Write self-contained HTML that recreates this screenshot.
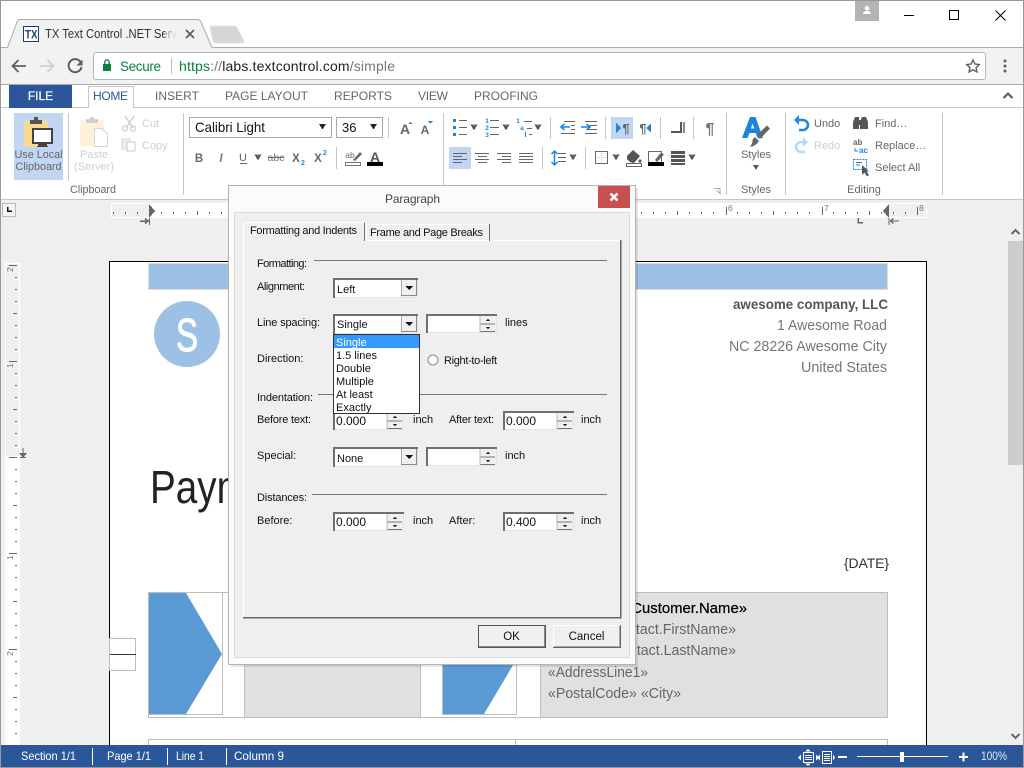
<!DOCTYPE html>
<html><head><meta charset="utf-8"><title>TX Text Control</title>
<style>
html,body{margin:0;padding:0;background:#fff;width:1024px;height:768px;overflow:hidden}
svg{display:block;position:absolute;left:0;top:0}
text{font-family:"Liberation Sans",sans-serif;white-space:pre}
.r{font-size:11px;fill:#666}
.d{font-size:11px;fill:#111}
.t{font-size:12px;fill:#666}
.s{font-size:12px;fill:#fff}
.c{text-anchor:middle}
.e{text-anchor:end}
.doc{font-size:14.5px;fill:#777}
</style></head><body>
<svg width="1024" height="768" viewBox="0 0 1024 768" xmlns="http://www.w3.org/2000/svg" shape-rendering="crispEdges">
<defs>
<g id="arr"><path d="M-3.5 -2.5h7l-3.5 6z" fill="#555"/><path d="M-1.5 -2.5h3l-1.5 2.5z" fill="#a5703a"/></g>
<g id="combo">
<rect width="85" height="20" fill="#fff"/>
<path d="M1 20V1H85" fill="none" stroke="#6f6f6f" stroke-width="2"/>
<path d="M2 19.500H84.500V2" fill="none" stroke="#e4e4e4"/>
<rect x="68" y="2" width="16" height="17" fill="#f0f0f0"/>
<path d="M68.500 18V2" stroke="#aaa"/><path d="M68 17.500H84M83.500 2V18" stroke="#888"/>
<path d="M72 8h8l-4 4z" fill="#111"/>
</g>
<g id="spin">
<rect width="71" height="19" fill="#fff"/>
<path d="M1 19V1H71" fill="none" stroke="#6f6f6f" stroke-width="2"/>
<path d="M2 18.500H70.500V2" fill="none" stroke="#e4e4e4"/>
<rect x="54" y="2" width="16" height="16" fill="#f0f0f0"/>
<path d="M54 10H69" stroke="#777"/><path d="M54 17.500H69" stroke="#777"/><path d="M54 2V18" stroke="#bbb"/>
<path d="M60 7h4l-2-2.500z" fill="#222"/><path d="M60 13h4l-2 2.500z" fill="#222"/>
</g>
</defs>

<!-- window / chrome -->
<rect width="1024" height="768" fill="#fff"/>
<rect y="48" width="1024" height="37" fill="#f2f2f2"/>
<rect y="47" width="1024" height="1" fill="#aaa"/>
<rect y="84" width="1024" height="1" fill="#aaa"/>
<path d="M7.500 47.500L17 22Q18 19.500 21 19.500H197Q200 19.500 201 22L212 47.500" fill="#f2f2f2" stroke="#aaa" shape-rendering="auto"/>
<rect x="8" y="47" width="204" height="1.500" fill="#f2f2f2"/>
<path d="M210 27Q210 26 212 26H234Q236 26 237 28L244 41Q244 43 242 43H216Q214 43 213 41Z" fill="#d6d6d6" stroke="#e4e4e4" shape-rendering="auto"/>
<rect x="23.500" y="26.500" width="15" height="15" fill="#fff" stroke="#1f3d6b"/>
<text x="25" y="38.500" style="font-size:12px;font-weight:bold;fill:#1f3d6b" textLength="12.500" lengthAdjust="spacingAndGlyphs">TX</text>
<text x="45" y="38" style="font-size:12.500px;fill:#333" textLength="132" lengthAdjust="spacingAndGlyphs">TX Text Control .NET Serv</text>
<rect x="165" y="24" width="15" height="20" fill="#f2f2f2" opacity=".6"/>
<rect x="172" y="24" width="8" height="20" fill="#f2f2f2" opacity=".7"/>
<path d="M186 30l8 8M194 30l-8 8" stroke="#5f5f5f" stroke-width="1.800" fill="none" shape-rendering="auto"/>
<rect x="855" y="0" width="24" height="21" fill="#b3b3b3"/>
<path d="M867 6a2.300 2.300 0 1 1-.01 0zM863 14q0-3 4-3t4 3z" fill="#fff" shape-rendering="auto"/>
<rect x="904" y="15" width="10" height="1" fill="#000"/>
<rect x="949.500" y="10.500" width="9" height="9" fill="none" stroke="#000"/>
<path d="M995.500 10.500l10 10M1005.500 10.500l-10 10" stroke="#000" fill="none" shape-rendering="auto"/>
<!-- toolbar -->
<path d="M26 66H13M18.500 60L12.500 66L18.500 72" fill="none" stroke="#5f5f5f" stroke-width="1.800" shape-rendering="auto"/>
<path d="M40 66H53M47.500 60L53.500 66L47.500 72" fill="none" stroke="#cfcfcf" stroke-width="1.800" shape-rendering="auto"/>
<path d="M80.500 62A6.500 6.500 0 1 0 81.500 67" fill="none" stroke="#5f5f5f" stroke-width="2" shape-rendering="auto"/>
<path d="M76.500 65.500H82.500V59.500z" fill="#5f5f5f" shape-rendering="auto"/>
<rect x="93.500" y="52.500" width="892" height="27" rx="2.500" fill="#fff" stroke="#b5b5b5" shape-rendering="auto"/>
<rect x="103" y="64" width="8" height="7" fill="#0b8043"/>
<path d="M104.800 64V62a2.200 2.200 0 0 1 4.400 0V64" fill="none" stroke="#0b8043" stroke-width="1.300" shape-rendering="auto"/>
<text x="120" y="71" style="font-size:13.500px;fill:#0b8043" textLength="41">Secure</text>
<rect x="171" y="58" width="1" height="16" fill="#bbb"/>
<text x="179" y="71" style="font-size:14px;fill:#555" textLength="216"><tspan fill="#0b8043">https</tspan><tspan fill="#777">://</tspan><tspan fill="#222">labs.textcontrol.com</tspan><tspan fill="#777">/simple</tspan></text>
<path d="M973 60l1.900 4 4.300.6-3.100 3 .8 4.300-3.900-2.100-3.900 2.100.8-4.300-3.100-3 4.300-.6z" fill="none" stroke="#5f5f5f" stroke-width="1.400" shape-rendering="auto"/>
<circle cx="1005" cy="61" r="1.500" fill="#5f5f5f" shape-rendering="auto"/><circle cx="1005" cy="66" r="1.500" fill="#5f5f5f" shape-rendering="auto"/><circle cx="1005" cy="71" r="1.500" fill="#5f5f5f" shape-rendering="auto"/>

<!-- ribbon tabs -->
<rect x="0" y="107" width="1024" height="1" fill="#c6c6c6"/>
<rect x="9" y="85" width="63" height="23" fill="#2b579a"/>
<text x="40.500" y="100" class="c" style="font-size:12px;fill:#fff;stroke:#fff;stroke-width:.25">FILE</text>
<path d="M88.500 108V86.500H133.500V108" fill="#fff" stroke="#c6c6c6"/>
<text x="93" y="100" style="font-size:12px;fill:#2b579a" textLength="35">HOME</text>
<text x="155" y="100" class="t" textLength="44">INSERT</text>
<text x="225" y="100" class="t" textLength="83">PAGE LAYOUT</text>
<text x="334" y="100" class="t" textLength="58">REPORTS</text>
<text x="418" y="100" class="t" textLength="30">VIEW</text>
<text x="474" y="100" class="t" textLength="64">PROOFING</text>
<path d="M1003.500 98L1008 93.500L1012.500 98" fill="none" stroke="#555" stroke-width="2" shape-rendering="auto"/>
<rect y="199" width="1024" height="1" fill="#c6c6c6"/>

<!-- ribbon seps -->
<g fill="#c6c6c6">
<rect x="68" y="113" width="1" height="68"/><rect x="183" y="113" width="1" height="82"/><rect x="443" y="113" width="1" height="82"/><rect x="726" y="113" width="1" height="82"/><rect x="785" y="113" width="1" height="82"/><rect x="942" y="113" width="1" height="82"/>
<rect x="388" y="117" width="1" height="21"/><rect x="336" y="147" width="1" height="22"/>
<rect x="550" y="117" width="1" height="22"/><rect x="605" y="117" width="1" height="22"/><rect x="660" y="117" width="1" height="22"/><rect x="693" y="117" width="1" height="22"/>
<rect x="542" y="147" width="1" height="22"/><rect x="585" y="147" width="1" height="22"/>
</g>

<!-- clipboard group -->
<rect x="14" y="113" width="49" height="67" fill="#c2d5f2"/>
<rect x="24" y="121" width="24" height="26" fill="#fdd88f"/>
<path d="M30 124V120H34V117H38V120H42V124z" fill="#555"/>
<rect x="33" y="129" width="19" height="14" fill="#fff" stroke="#444" stroke-width="2"/>
<rect x="38" y="144" width="9" height="2" fill="#444"/><rect x="37" y="146" width="11" height="1" fill="#444"/>
<text x="38.500" y="158" class="r c" textLength="48" lengthAdjust="spacingAndGlyphs">Use Local</text>
<text x="38.500" y="170" class="r c" textLength="46" lengthAdjust="spacingAndGlyphs">Clipboard</text>
<rect x="80" y="120" width="24" height="26" fill="#fef1d8"/>
<path d="M86 123V119H90V117H94V119H98V123z" fill="#d0d0d0"/>
<path d="M94.500 128.500H102L107.500 134V146.500H94.500z" fill="#fff" stroke="#d5d5d5"/>
<text x="94" y="158" class="r c" style="fill:#cfcfcf" textLength="28">Paste</text>
<text x="94" y="170" class="r c" style="fill:#cfcfcf" textLength="40">(Server)</text>
<path d="M125 116L133 128M134 116L126 128" stroke="#d0d0d0" stroke-width="1.500" fill="none" shape-rendering="auto"/>
<circle cx="125" cy="128.500" r="2.600" fill="none" stroke="#d0d0d0" stroke-width="1.300" shape-rendering="auto"/><circle cx="133" cy="128.500" r="2.600" fill="none" stroke="#d0d0d0" stroke-width="1.300" shape-rendering="auto"/>
<text x="142" y="127" class="r" style="fill:#cfcfcf">Cut</text>
<rect x="122" y="139" width="8" height="10" fill="#e8f1fb" stroke="#c6d9ee"/><rect x="127" y="142" width="8" height="9" fill="#fff" stroke="#c8c8c8"/>
<text x="142" y="149" class="r" style="fill:#cfcfcf">Copy</text>
<text x="93" y="193" class="r c" textLength="46" lengthAdjust="spacingAndGlyphs">Clipboard</text>

<!-- font group -->
<rect x="189.500" y="117.500" width="142" height="20" fill="#fff" stroke="#a9a9a9"/>
<text x="195" y="132" style="font-size:14px;fill:#111" textLength="70" lengthAdjust="spacingAndGlyphs">Calibri Light</text>
<path d="M319 124h7l-3.500 5.500z" fill="#222"/>
<rect x="336.500" y="117.500" width="46" height="20" fill="#fff" stroke="#a9a9a9"/>
<text x="342" y="132" style="font-size:13px;fill:#111">36</text>
<path d="M370 124h7l-3.500 5.500z" fill="#222"/>
<text x="405" y="134" class="c" style="font-size:14px;font-weight:bold;fill:#666">A</text>
<path d="M408.500 124h4l-2-2.500z" fill="#2a8ad8"/>
<text x="425" y="134" class="c" style="font-size:12px;font-weight:bold;fill:#666">A</text>
<path d="M428 121h5l-2.500 3z" fill="#2a8ad8"/>
<text x="199" y="162" class="c" style="font-size:11.500px;font-weight:bold;fill:#666">B</text>
<text x="221" y="162" class="c" style="font-size:11.500px;font-style:italic;font-weight:bold;fill:#777">I</text>
<text x="243" y="161" class="c" style="font-size:11px;fill:#666">U</text><rect x="240" y="163" width="7" height="1" fill="#666"/>
<use href="#arr" x="258" y="157"/>
<text x="276" y="161" class="c" style="font-size:10.500px;fill:#777">abc</text><rect x="268" y="157" width="16" height="1" fill="#666"/>
<text x="296" y="162" class="c" style="font-size:11.500px;font-weight:bold;fill:#666">X</text><text x="303" y="165" class="c" style="font-size:7px;font-weight:bold;fill:#2a8ad8">2</text>
<text x="318" y="162" class="c" style="font-size:11.500px;font-weight:bold;fill:#666">X</text><text x="325" y="155" class="c" style="font-size:7px;font-weight:bold;fill:#2a8ad8">2</text>
<text x="350" y="158" class="c" style="font-size:8.500px;fill:#666">ab</text>
<rect x="345.500" y="162.500" width="15" height="3" fill="#fff" stroke="#777"/>
<path d="M353 160L360 152L362 154L355 161z" fill="#666" shape-rendering="auto"/>
<text x="375" y="162" class="c" style="font-size:14px;font-weight:bold;fill:#555">A</text>
<rect x="367" y="162" width="16" height="4" fill="#000"/>

<!-- paragraph group -->
<g fill="#666">
<rect x="459" y="120" width="8" height="1"/><rect x="459" y="127" width="8" height="1"/><rect x="459" y="134" width="8" height="1"/>
<rect x="490" y="120" width="9" height="1"/><rect x="490" y="127" width="9" height="1"/><rect x="490" y="134" width="9" height="1"/>
<rect x="524" y="121" width="8" height="1"/><rect x="527" y="128" width="5" height="1"/><rect x="529" y="134" width="3" height="1"/>
</g>
<g fill="#1a86e0">
<rect x="453" y="119" width="3" height="3"/><rect x="453" y="126" width="3" height="3"/><rect x="453" y="133" width="3" height="3"/>
</g>
<text x="487" y="123" class="c" style="font-size:6.500px;font-weight:bold;fill:#1a86e0">1</text><text x="487" y="130" class="c" style="font-size:6.500px;font-weight:bold;fill:#1a86e0">2</text><text x="487" y="137" class="c" style="font-size:6.500px;font-weight:bold;fill:#1a86e0">3</text>
<text x="518" y="123" class="c" style="font-size:6.500px;font-weight:bold;fill:#1a86e0">1</text><text x="522" y="130" class="c" style="font-size:6.500px;font-weight:bold;fill:#1a86e0">a</text><rect x="525" y="132" width="1" height="5" fill="#1a86e0"/>
<use href="#arr" x="474" y="127"/><use href="#arr" x="506" y="127"/><use href="#arr" x="538" y="127"/>
<g fill="#666">
<rect x="564" y="121" width="11" height="1"/><rect x="571" y="125" width="4" height="1"/><rect x="571" y="129" width="4" height="1"/><rect x="561" y="133" width="14" height="1"/>
<rect x="585" y="121" width="12" height="1"/><rect x="588" y="125" width="9" height="1"/><rect x="588" y="129" width="9" height="1"/><rect x="585" y="133" width="12" height="1"/>
</g>
<path d="M570 127H561M564.500 124L561 127L564.500 130" stroke="#1a86e0" stroke-width="1.600" fill="none" shape-rendering="auto"/>
<path d="M581 127H590M586.500 124L590 127L586.500 130" stroke="#1a86e0" stroke-width="1.600" fill="none" shape-rendering="auto"/>
<rect x="611" y="117" width="22" height="22" fill="#c2d5f2"/>
<path d="M616 123V133L621 128z" fill="#1a86e0"/>
<text x="626" y="133" class="c" style="font-size:13px;font-weight:bold;fill:#666">¶</text>
<text x="643" y="133" class="c" style="font-size:13px;font-weight:bold;fill:#666">¶</text>
<path d="M650 123V133L645 128z" fill="#1a86e0" transform="translate(1 0)"/>
<path d="M671 131H680V122H682V133H671z" fill="#555"/><rect x="683" y="122" width="2" height="11" fill="#888"/>
<text x="710" y="134" class="c" style="font-size:16px;font-weight:bold;fill:#777">¶</text>
<rect x="449" y="147" width="22" height="22" fill="#c2d5f2"/>
<g fill="#666">
<rect x="453" y="153" width="14" height="1"/><rect x="453" y="156" width="9" height="1"/><rect x="453" y="159" width="14" height="1"/><rect x="453" y="162" width="9" height="1"/>
<rect x="475" y="153" width="14" height="1"/><rect x="478" y="156" width="9" height="1"/><rect x="475" y="159" width="14" height="1"/><rect x="478" y="162" width="9" height="1"/>
<rect x="497" y="153" width="14" height="1"/><rect x="502" y="156" width="9" height="1"/><rect x="497" y="159" width="14" height="1"/><rect x="502" y="162" width="9" height="1"/>
<rect x="519" y="153" width="14" height="1"/><rect x="519" y="156" width="14" height="1"/><rect x="519" y="159" width="14" height="1"/><rect x="519" y="162" width="14" height="1"/>
<rect x="558" y="153" width="8" height="1"/><rect x="558" y="157" width="8" height="1"/><rect x="558" y="161" width="8" height="1"/>
</g>
<path d="M554.500 151V165M551.500 154L554.500 151L557.500 154M551.500 162L554.500 165L557.500 162" stroke="#1a86e0" stroke-width="1.500" fill="none" shape-rendering="auto"/>
<use href="#arr" x="573" y="157"/>
<rect x="595.500" y="151.500" width="12" height="12" fill="#fff" stroke="#666"/>
<path d="M601.500 153V163M597 157.500H606" stroke="#bbb" stroke-dasharray="1 1"/>
<use href="#arr" x="616" y="157"/>
<path d="M627 156L633 150L640 156L634 163Q630 163 627 159z" fill="#555" shape-rendering="auto"/><circle cx="640" cy="161" r="1.500" fill="#555"/>
<rect x="626.500" y="163.500" width="15" height="3" fill="#fff" stroke="#666"/>
<rect x="648.500" y="151.500" width="13" height="11" fill="#fff" stroke="#666"/>
<path d="M655 160L661 152.500L664 154.500L657 162z" fill="#666" shape-rendering="auto"/>
<rect x="648" y="162" width="16" height="4" fill="#000"/>
<rect x="671" y="151" width="14" height="3" fill="#555"/><rect x="671" y="155" width="14" height="3" fill="#555"/><rect x="671" y="159" width="14" height="3" fill="#555"/><rect x="671" y="163" width="14" height="2" fill="#555"/>
<use href="#arr" x="692" y="157"/>
<path d="M714.500 188.500H720V194M716.500 190.500L721 194" fill="none" stroke="#aaa"/>

<!-- styles group -->
<path fill-rule="evenodd" d="M742 138L750 117H755.500L763 138H757.500L755.700 133H749.500L747.500 138zM751 128.500H754.200L752.500 123.500z" fill="#1a86e0" shape-rendering="auto"/>
<path d="M757 135L767 125.500L770 128.500L760 139zM755 137L759 141Q756 146 750 147Q753 143 752.500 139.500z" fill="#666" shape-rendering="auto"/>
<text x="756" y="158" class="r c">Styles</text>
<path d="M753 165h6l-3 5z" fill="#555"/>
<text x="756" y="193" class="r c">Styles</text>

<!-- editing -->
<path d="M797 120H803A5 5 0 0 1 803 130H799" fill="none" stroke="#1a86e0" stroke-width="2.500" shape-rendering="auto"/>
<path d="M799 115L794 120L799 125z" fill="#1a86e0" shape-rendering="auto"/>
<text x="814" y="127" class="r">Undo</text>
<path d="M805 142H801A5 5 0 0 0 801 152H805" fill="none" stroke="#b5d9f5" stroke-width="2.500" shape-rendering="auto"/>
<path d="M803 137L808 142L803 147z" fill="#b5d9f5" shape-rendering="auto"/>
<text x="814" y="149" class="r" style="fill:#cfcfcf">Redo</text>
<path d="M853 129V122L855 117H859V129zM860 129V122L862 117H866L868 122V129H860z" fill="#555"/><rect x="858" y="120" width="3" height="5" fill="#555"/>
<text x="875" y="127" class="r">Find…</text>
<text x="853" y="145" style="font-size:8px;fill:#666;font-weight:bold">ab</text><text x="859" y="153" style="font-size:8px;fill:#1a86e0;font-weight:bold">ac</text>
<path d="M855 148V151H858" stroke="#1a86e0" fill="none"/>
<text x="875" y="149" class="r">Replace…</text>
<rect x="853.500" y="159.500" width="13" height="10" fill="none" stroke="#1a86e0" stroke-dasharray="2 1"/>
<path d="M856 162.500H862M856 165H860" stroke="#1a86e0"/>
<path d="M862 165V175L864.500 172.500L867 176.500L869 175L866.500 171.500H869z" fill="#555" shape-rendering="auto"/>
<text x="875" y="171" class="r">Select All</text>
<text x="864" y="193" class="r c">Editing</text>

<!-- workspace -->
<rect x="0" y="200" width="1024" height="545" fill="#efefef"/>
<!-- tab selector -->
<rect x="2.500" y="203.500" width="13" height="13" fill="#f5f5f5" stroke="#bbb"/>
<path d="M7 207V212H12V210.500H8.500V207z" fill="#111"/>
<!-- h ruler -->
<rect x="111" y="203" width="816" height="15" fill="#fff"/>
<rect x="112" y="204" width="37" height="13" fill="#efefef"/>
<rect x="889" y="204" width="37" height="13" fill="#efefef"/>
<g fill="#666" id="hticks">
<rect x="113" y="212" width="1" height="2"/><rect x="125" y="212" width="1" height="2"/><rect x="137" y="212" width="1" height="2"/>
<rect x="161" y="212" width="1" height="2"/><rect x="173" y="212" width="1" height="2"/><rect x="185" y="212" width="1" height="2"/><rect x="197" y="211" width="1" height="4"/><rect x="209" y="212" width="1" height="2"/><rect x="221" y="212" width="1" height="2"/>
<rect x="641" y="212" width="1" height="2"/><rect x="653" y="212" width="1" height="2"/><rect x="665" y="212" width="1" height="2"/><rect x="677" y="211" width="1" height="4"/><rect x="689" y="212" width="1" height="2"/><rect x="701" y="212" width="1" height="2"/><rect x="713" y="212" width="1" height="2"/>
<rect x="726" y="207" width="1" height="8"/>
<rect x="737" y="212" width="1" height="2"/><rect x="749" y="212" width="1" height="2"/><rect x="761" y="212" width="1" height="2"/><rect x="773" y="211" width="1" height="4"/><rect x="785" y="212" width="1" height="2"/><rect x="797" y="212" width="1" height="2"/><rect x="809" y="212" width="1" height="2"/>
<rect x="822" y="207" width="1" height="8"/>
<rect x="833" y="212" width="1" height="2"/><rect x="845" y="212" width="1" height="2"/><rect x="857" y="212" width="1" height="2"/><rect x="869" y="211" width="1" height="4"/><rect x="881" y="212" width="1" height="2"/><rect x="893" y="212" width="1" height="2"/><rect x="905" y="212" width="1" height="2"/>
<rect x="917" y="207" width="1" height="8"/>
</g>
<text x="728" y="211" style="font-size:8.500px;fill:#777">6</text>
<text x="824" y="211" style="font-size:8.500px;fill:#777">7</text>
<text x="919" y="211" style="font-size:8.500px;fill:#777">8</text>
<path d="M149 204V218L155 211z" fill="#666"/><path d="M889 204V218L883 211z" fill="#666"/>
<path d="M140 221H148M145 218.500L148 221L145 223.500" fill="none" stroke="#666" stroke-width="1.500"/><rect x="149" y="218" width="1" height="7" fill="#666"/>
<path d="M889 218V225M899 221H891M893.500 218.500L890.500 221L893.500 223.500" fill="none" stroke="#666" stroke-width="1.300"/>
<path d="M858 218V222.500H863" fill="none" stroke="#666" stroke-width="1.500"/>
<!-- scrollbar -->
<rect x="1008" y="241" width="15" height="224" fill="#cdcdcd"/>
<path d="M1011.500 234L1015.500 230L1019.500 234" fill="none" stroke="#666" stroke-width="2" shape-rendering="auto"/>
<path d="M1011.500 734L1015.500 738L1019.500 734" fill="none" stroke="#666" stroke-width="2" shape-rendering="auto"/>
<!-- v ruler -->
<rect x="5" y="263" width="15" height="482" fill="#fff"/>
<rect x="6" y="264" width="13" height="192" fill="#efefef"/>
<g fill="#666">
<rect x="9" y="265" width="8" height="1"/><rect x="15" y="277" width="2" height="1"/><rect x="15" y="289" width="2" height="1"/><rect x="15" y="301" width="2" height="1"/><rect x="13" y="313" width="4" height="1"/><rect x="15" y="325" width="2" height="1"/><rect x="15" y="337" width="2" height="1"/><rect x="15" y="349" width="2" height="1"/><rect x="9" y="361" width="8" height="1"/><rect x="15" y="373" width="2" height="1"/><rect x="15" y="385" width="2" height="1"/><rect x="15" y="397" width="2" height="1"/><rect x="13" y="409" width="4" height="1"/><rect x="15" y="421" width="2" height="1"/><rect x="15" y="433" width="2" height="1"/><rect x="15" y="445" width="2" height="1"/><rect x="9" y="457" width="8" height="1"/><rect x="15" y="469" width="2" height="1"/><rect x="15" y="481" width="2" height="1"/><rect x="15" y="493" width="2" height="1"/><rect x="13" y="505" width="4" height="1"/><rect x="15" y="517" width="2" height="1"/><rect x="15" y="529" width="2" height="1"/><rect x="15" y="541" width="2" height="1"/><rect x="9" y="553" width="8" height="1"/><rect x="15" y="565" width="2" height="1"/><rect x="15" y="577" width="2" height="1"/><rect x="15" y="589" width="2" height="1"/><rect x="13" y="601" width="4" height="1"/><rect x="15" y="613" width="2" height="1"/><rect x="15" y="625" width="2" height="1"/><rect x="15" y="637" width="2" height="1"/><rect x="9" y="649" width="8" height="1"/><rect x="15" y="661" width="2" height="1"/><rect x="15" y="673" width="2" height="1"/><rect x="15" y="685" width="2" height="1"/><rect x="13" y="697" width="4" height="1"/><rect x="15" y="709" width="2" height="1"/><rect x="15" y="721" width="2" height="1"/><rect x="15" y="733" width="2" height="1"/>
</g>
<text transform="translate(13 272) rotate(-90)" style="font-size:8.500px;fill:#777">2</text>
<text transform="translate(13 368) rotate(-90)" style="font-size:8.500px;fill:#777">1</text>
<text transform="translate(13 560) rotate(-90)" style="font-size:8.500px;fill:#777">1</text>
<text transform="translate(13 656) rotate(-90)" style="font-size:8.500px;fill:#777">2</text>
<path d="M23 448V457M20 453.500H26L23 457z M20 457.500H26" stroke="#666" fill="#666"/>

<!-- page -->
<rect x="109.500" y="261.500" width="817" height="490" fill="#fff" stroke="#000"/>
<rect x="148.500" y="263.500" width="739" height="26" fill="#9dc1e4" stroke="#dcdcdc"/>
<circle cx="187" cy="334" r="33" fill="#9dc1e4" shape-rendering="auto"/>
<text transform="translate(187 351) scale(.72 1)" class="c" style="font-size:46px;fill:#fff;stroke:#fff;stroke-width:1">S</text>
<text x="888" y="309" class="e" style="font-size:14px;font-weight:bold;fill:#555" textLength="155" lengthAdjust="spacingAndGlyphs">awesome company, LLC</text>
<text x="887" y="330" class="doc e" textLength="110" lengthAdjust="spacingAndGlyphs">1 Awesome Road</text>
<text x="887" y="351" class="doc e" textLength="158" lengthAdjust="spacingAndGlyphs">NC 28226 Awesome City</text>
<text x="887" y="372" class="doc e" textLength="86" lengthAdjust="spacingAndGlyphs">United States</text>
<text transform="translate(150 503) scale(.84 1)" style="font-size:46px;fill:#222">Payment</text>
<text x="889" y="568" class="e" style="font-size:14px;fill:#333" textLength="45">{DATE}</text>
<!-- table -->
<rect x="109.500" y="638.500" width="26" height="32" fill="#fff" stroke="#bbb"/>
<rect x="110" y="654" width="26" height="1" fill="#333"/>
<rect x="148.500" y="592.500" width="739" height="125" fill="#fff" stroke="#bdbdbd"/>
<rect x="148.500" y="592.500" width="74" height="122" fill="#fff" stroke="#bdbdbd"/>
<path d="M149 593H186L222 654L186 714H149z" fill="#5b9bd5" shape-rendering="auto"/>
<rect x="244.500" y="592.500" width="176" height="125" fill="#e0e0e0" stroke="#bdbdbd"/>
<rect x="442.500" y="592.500" width="74" height="122" fill="#fff" stroke="#bdbdbd"/>
<path d="M443 593H516V660L484 714H443z" fill="#5b9bd5" shape-rendering="auto"/>
<rect x="540.500" y="592.500" width="347" height="125" fill="#e0e0e0" stroke="#bdbdbd"/>
<text x="747" y="613" class="e" style="font-size:15px;fill:#000;stroke:#000;stroke-width:.25" textLength="124" lengthAdjust="spacingAndGlyphs">«Customer.Name»</text>
<text x="736" y="634" class="doc e" style="fill:#666" textLength="134" lengthAdjust="spacingAndGlyphs">«Contact.FirstName»</text>
<text x="736" y="655" class="doc e" style="fill:#666" textLength="133" lengthAdjust="spacingAndGlyphs">«Contact.LastName»</text>
<text x="548" y="677" class="doc" style="fill:#666" textLength="100" lengthAdjust="spacingAndGlyphs">«AddressLine1»</text>
<text x="548" y="698" class="doc" style="fill:#666" textLength="133" lengthAdjust="spacingAndGlyphs">«PostalCode» «City»</text>
<rect x="148.500" y="739.500" width="739" height="12" fill="#fff" stroke="#bdbdbd"/>
<rect x="515" y="740" width="1" height="5" fill="#bdbdbd"/>

<!-- status bar -->
<rect x="0" y="745" width="1024" height="22" fill="#2b579a"/>
<rect x="0" y="767" width="1024" height="1" fill="#999"/>
<rect x="0" y="0" width="1" height="768" fill="#999"/><rect x="1023" y="0" width="1" height="768" fill="#999"/><rect x="0" y="0" width="1024" height="1" fill="#999"/>
<g fill="#fff">
<rect x="92" y="748" width="1" height="17"/><rect x="167" y="748" width="1" height="17"/><rect x="226" y="748" width="1" height="17"/>
</g>
<text x="21" y="760" class="s" textLength="55" lengthAdjust="spacingAndGlyphs">Section 1/1</text>
<text x="107" y="760" class="s" textLength="44" lengthAdjust="spacingAndGlyphs">Page 1/1</text>
<text x="176" y="760" class="s" textLength="28" lengthAdjust="spacingAndGlyphs">Line 1</text>
<text x="234" y="760" class="s" textLength="50" lengthAdjust="spacingAndGlyphs">Column 9</text>
<g fill="#fff" stroke="none">
<rect x="803.500" y="752.500" width="10" height="10" fill="none" stroke="#fff"/><rect x="805" y="755" width="7" height="1"/><rect x="805" y="757" width="7" height="1"/><rect x="805" y="759" width="7" height="1"/>
<path d="M798 757.500L801 754.500V760.500zM819 757.500L816 754.500V760.500zM808 749L805 751.500H811zM808 766L805 763.500H811z" shape-rendering="auto"/>
<rect x="822.500" y="751.500" width="9" height="12" fill="none" stroke="#fff"/><rect x="824" y="754" width="6" height="1"/><rect x="824" y="756" width="6" height="1"/><rect x="824" y="758" width="6" height="1"/><rect x="824" y="760" width="6" height="1"/>
<path d="M817 757.500L820 754.500V760.500zM835 757.500L833 754.500V760.500z" shape-rendering="auto"/>
<rect x="838" y="756" width="9" height="2"/>
<rect x="857" y="756" width="91" height="1"/>
<rect x="900" y="752" width="4" height="10"/>
<rect x="959" y="756" width="9" height="2"/><rect x="962.500" y="752.500" width="2" height="9"/>
</g>
<text x="981" y="760" class="s" textLength="26" lengthAdjust="spacingAndGlyphs" style="fill:#dfe7f3">100%</text>

<!-- dialog -->
<rect x="231" y="188" width="407" height="479" fill="#000" opacity=".1"/>
<rect x="228.500" y="185.500" width="407" height="479" fill="#fbfbfb" stroke="#b4b4b4"/>
<rect x="598" y="186" width="32" height="22" fill="#c75050"/>
<path d="M610.500 193.500L617.500 200.500M617.500 193.500L610.500 200.500" stroke="#fff" stroke-width="2.600" fill="none" shape-rendering="auto"/>
<text x="412.500" y="203" class="c" style="font-size:12px;fill:#444" textLength="55">Paragraph</text>
<rect x="234.500" y="212.500" width="395" height="445" fill="#efefef" stroke="#dcdcdc"/>
<rect x="243" y="240" width="378" height="378" fill="#efefef"/>
<path d="M243.500 617V240.500H620" fill="none" stroke="#fff"/>
<path d="M243 617.500H620.500V240" fill="none" stroke="#666" stroke-width="1.500"/>
<rect x="366.500" y="224.500" width="123" height="16" fill="#efefef" stroke="#fff"/>
<path d="M489.500 224V241" stroke="#666"/>
<rect x="243.500" y="222.500" width="121" height="19" fill="#efefef" stroke="#fff"/>
<rect x="244" y="240" width="120" height="2" fill="#efefef"/>
<path d="M364.500 222.500V241" stroke="#777"/>
<text x="250" y="234" class="d" textLength="107">Formatting and Indents</text>
<text x="370" y="236" class="d" textLength="113">Frame and Page Breaks</text>
<text x="257" y="267" class="d" textLength="50">Formatting:</text>
<rect x="314" y="260" width="293" height="1" fill="#777"/>
<text x="257" y="290" class="d" textLength="48">Alignment:</text>
<use href="#combo" x="333" y="278"/>
<text x="337" y="293" class="d">Left</text>
<text x="257" y="326" class="d" textLength="63">Line spacing:</text>
<use href="#combo" x="333" y="314"/>
<text x="337" y="328" class="d">Single</text>
<use href="#spin" x="426" y="314"/>
<text x="505" y="326" class="d">lines</text>
<text x="257" y="362" class="d">Direction:</text>
<circle cx="433" cy="360" r="5" fill="#fff" stroke="#888" shape-rendering="auto"/>
<text x="444" y="364" class="d" textLength="53">Right-to-left</text>
<text x="257" y="401" class="d" textLength="56">Indentation:</text>
<rect x="318" y="394" width="289" height="1" fill="#777"/>
<text x="257" y="423" class="d" textLength="54">Before text:</text>
<use href="#spin" x="333" y="411"/>
<text x="336" y="425" class="d" style="font-size:12px">0.000</text>
<text x="413" y="423" class="d">inch</text>
<text x="449" y="423" class="d" textLength="45">After text:</text>
<use href="#spin" x="503" y="411"/>
<text x="506" y="425" class="d" style="font-size:12px">0.000</text>
<text x="581" y="423" class="d">inch</text>
<text x="257" y="459" class="d">Special:</text>
<use href="#combo" x="333" y="447"/>
<text x="337" y="462" class="d">None</text>
<use href="#spin" x="426" y="447"/>
<text x="505" y="459" class="d">inch</text>
<text x="257" y="501" class="d" textLength="50">Distances:</text>
<rect x="312" y="494" width="295" height="1" fill="#777"/>
<text x="257" y="524" class="d">Before:</text>
<use href="#spin" x="333" y="512"/>
<text x="336" y="526" class="d" style="font-size:12px">0.000</text>
<text x="413" y="524" class="d">inch</text>
<text x="449" y="524" class="d">After:</text>
<use href="#spin" x="503" y="512"/>
<text x="506" y="526" class="d" style="font-size:12px">0.400</text>
<text x="581" y="524" class="d">inch</text>
<!-- dropdown -->
<rect x="333.500" y="334.500" width="86" height="79" fill="#fff" stroke="#333"/>
<rect x="334" y="335" width="85" height="13" fill="#3399ff"/>
<text x="336" y="346" class="d" style="fill:#fff">Single</text>
<text x="336" y="359" class="d">1.5 lines</text>
<text x="336" y="372" class="d">Double</text>
<text x="336" y="385" class="d">Multiple</text>
<text x="336" y="398" class="d">At least</text>
<text x="336" y="411" class="d">Exactly</text>
<!-- buttons -->
<rect x="478" y="625" width="68" height="23" fill="#f0f0f0"/>
<path d="M478.500 648V625.500H546" fill="none" stroke="#fff"/><path d="M478.500 625.500H545.500V647.500H478.500z" fill="none" stroke="#555" stroke-width="1"/><path d="M479 646.500H545M544.500 626V647" stroke="#888"/>
<text x="511.500" y="640" class="c d" style="font-size:11.500px">OK</text>
<rect x="553" y="625" width="68" height="23" fill="#f0f0f0"/>
<path d="M553.500 648V625.500H621" fill="none" stroke="#fff"/><path d="M553 647.500H620.500V625" fill="none" stroke="#666"/><path d="M554 646.500H619.500V626" fill="none" stroke="#aaa"/>
<text x="586.500" y="640" class="c d" style="font-size:11.500px">Cancel</text>
</svg>
</body></html>
